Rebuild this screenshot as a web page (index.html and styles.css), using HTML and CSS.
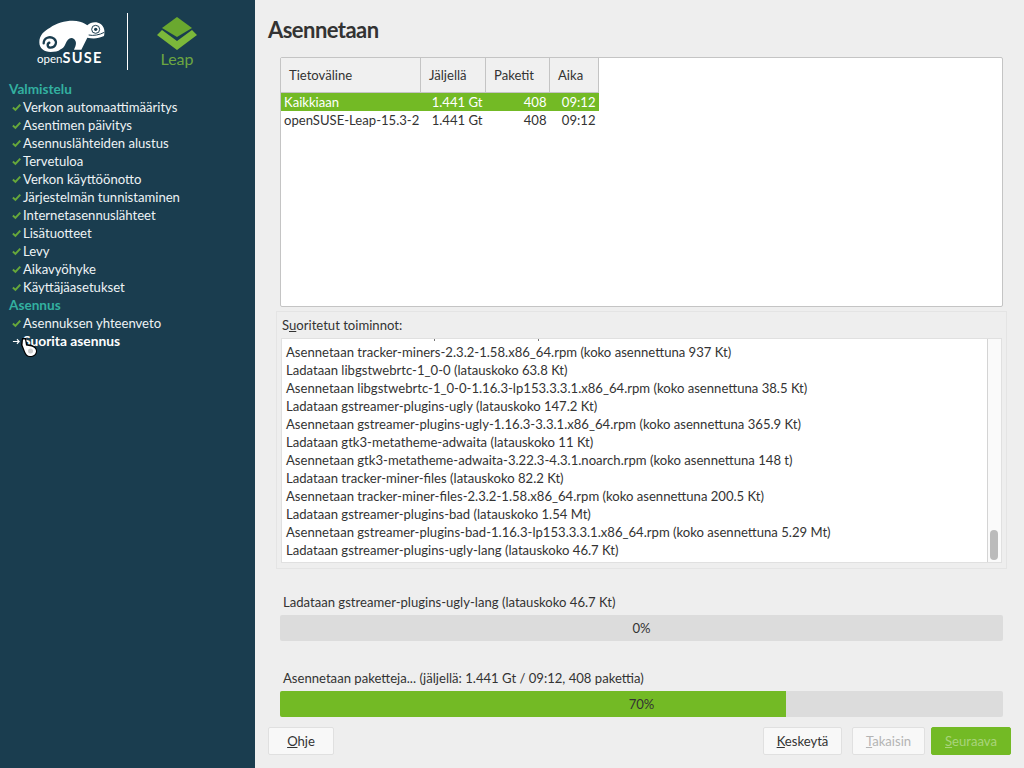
FILE: index.html
```html
<!DOCTYPE html>
<html>
<head>
    <title>Asennetaan</title>
    <link rel="stylesheet" href="styles.css">
</head>
<body>
    <svg class="icon-defs" width="0" height="0">
        <symbol id="check" viewBox="0 0 10 9">
            <path fill="none" stroke="#67a83a" stroke-width="2.200" d="M1 4.500L3.800 7.200L9.200 1.300"/>
        </symbol>
    </svg>
    <div class="sidebar">
        <div class="logo">
            <div class="logo-suse">
                <svg class="chameleon" width="85" height="37" viewBox="0 0 255 111">
                    <path fill="#fff" d="M28 82C28 60 42 48 60 38C85 22 120 13 150 20C160 23 168 27 172 31C182 21 200 19 212 27C222 34 226 48 222 63C205 71 190 72 172 68C166 80 160 92 154 104L132 104C138 92 141 82 133 73C122 64 112 72 106 88C103 96 98 100 92 103C84 110 74 111 62 111C42 111 28 100 28 82Z"/>
                    <path fill="none" stroke="#1a3d4f" stroke-width="7" stroke-linecap="round" d="M41 85C41 68 60 62 72 71C83 81 77 98 62 98C52 98 50 87 58 83"/>
                    <circle cx="197" cy="43" r="12" fill="#fff" stroke="#1a3d4f" stroke-width="3"/>
                    <circle cx="197" cy="43" r="5" fill="#1a3d4f"/>
                    <path fill="none" stroke="#1a3d4f" stroke-width="3" d="M176 60C190 63 208 60 223 52"/>
                </svg>
                <div class="suse-name"><span class="suse-open">open</span><span class="suse-bold">SUSE</span></div>
            </div>
            <div class="logo-line"></div>
            <div class="logo-leap">
                <svg width="40" height="33" viewBox="0 0 40 33">
                    <path fill="#6aa82f" d="M20 0L35 11L20 20L5 11Z"/>
                    <path fill="#7cb83a" d="M5 13L20 24L35 13L40 18L20 33L0 18Z"/>
                </svg>
                <div class="leap-name">Leap</div>
            </div>
        </div>
        <ul class="steps">
            <li class="step-head">Valmistelu</li>
            <li class="step"><svg class="check"><use href="#check"/></svg>Verkon automaattimääritys</li>
            <li class="step"><svg class="check"><use href="#check"/></svg>Asentimen päivitys</li>
            <li class="step"><svg class="check"><use href="#check"/></svg>Asennuslähteiden alustus</li>
            <li class="step"><svg class="check"><use href="#check"/></svg>Tervetuloa</li>
            <li class="step"><svg class="check"><use href="#check"/></svg>Verkon käyttöönotto</li>
            <li class="step"><svg class="check"><use href="#check"/></svg>Järjestelmän tunnistaminen</li>
            <li class="step"><svg class="check"><use href="#check"/></svg>Internetasennuslähteet</li>
            <li class="step"><svg class="check"><use href="#check"/></svg>Lisätuotteet</li>
            <li class="step"><svg class="check"><use href="#check"/></svg>Levy</li>
            <li class="step"><svg class="check"><use href="#check"/></svg>Aikavyöhyke</li>
            <li class="step"><svg class="check"><use href="#check"/></svg>Käyttäjäasetukset</li>
            <li class="step-head">Asennus</li>
            <li class="step"><svg class="check"><use href="#check"/></svg>Asennuksen yhteenveto</li>
            <li class="step step-current">
                <svg class="check" viewBox="0 0 10 9"><path fill="none" stroke="#fff" stroke-width="1.200" d="M1 4.500H8M5.500 2L8 4.500L5.500 7"/></svg>Suorita asennus
                <svg class="cursor" width="16" height="19" viewBox="0 0 16 19">
                    <path fill="#000" d="M1 0H5L6 6L11 7C14 8 16 10 16 13C16 17 13 19 9 19C6 19 4 17 3 14L0 7Z"/>
                    <path fill="#fff" d="M2 1.500H4L5 7.500L10.500 8.500C13 9 15 11 15 13C15 16 12.500 18 9 18C6.500 18 5 16 4 13.500L1.500 7Z"/>
                    <circle cx="9.500" cy="13" r="2.500" fill="#ccc"/>
                </svg>
            </li>
        </ul>
    </div>

    <div class="main">
        <h1>Asennetaan</h1>

        <div class="media-box">
            <table class="media-table">
                <thead>
                    <tr>
                        <th class="col-name">Tietoväline</th>
                        <th class="col-left">Jäljellä</th>
                        <th class="col-pkg">Paketit</th>
                        <th class="col-time">Aika</th>
                    </tr>
                </thead>
                <tbody>
                    <tr class="selected">
                        <td>Kaikkiaan</td>
                        <td class="num">1.441 Gt</td>
                        <td class="num">408</td>
                        <td class="num">09:12</td>
                    </tr>
                    <tr>
                        <td>openSUSE-Leap-15.3-2</td>
                        <td class="num">1.441 Gt</td>
                        <td class="num">408</td>
                        <td class="num">09:12</td>
                    </tr>
                </tbody>
            </table>
        </div>

        <div class="log-frame">
            <div class="log-label">S<u>u</u>oritetut toiminnot:</div>
            <div class="log-box">
                <div class="log-lines">
                    <div class="log-clipped"><span class="tick"></span><span class="tick tick-far"></span></div>
                    <div>Asennetaan tracker-miners-2.3.2-1.58.x86_64.rpm (koko asennettuna 937 Kt)</div>
                    <div>Ladataan libgstwebrtc-1_0-0 (latauskoko 63.8 Kt)</div>
                    <div>Asennetaan libgstwebrtc-1_0-0-1.16.3-lp153.3.3.1.x86_64.rpm (koko asennettuna 38.5 Kt)</div>
                    <div>Ladataan gstreamer-plugins-ugly (latauskoko 147.2 Kt)</div>
                    <div>Asennetaan gstreamer-plugins-ugly-1.16.3-3.3.1.x86_64.rpm (koko asennettuna 365.9 Kt)</div>
                    <div>Ladataan gtk3-metatheme-adwaita (latauskoko 11 Kt)</div>
                    <div>Asennetaan gtk3-metatheme-adwaita-3.22.3-4.3.1.noarch.rpm (koko asennettuna 148 t)</div>
                    <div>Ladataan tracker-miner-files (latauskoko 82.2 Kt)</div>
                    <div>Asennetaan tracker-miner-files-2.3.2-1.58.x86_64.rpm (koko asennettuna 200.5 Kt)</div>
                    <div>Ladataan gstreamer-plugins-bad (latauskoko 1.54 Mt)</div>
                    <div>Asennetaan gstreamer-plugins-bad-1.16.3-lp153.3.3.1.x86_64.rpm (koko asennettuna 5.29 Mt)</div>
                    <div>Ladataan gstreamer-plugins-ugly-lang (latauskoko 46.7 Kt)</div>
                </div>
                <div class="scrollbar"><div class="scroll-thumb"></div></div>
            </div>
        </div>

        <div class="progress-block first">
            <div class="progress-label">Ladataan gstreamer-plugins-ugly-lang (latauskoko 46.7 Kt)</div>
            <div class="progress">
                <div class="progress-text">0%</div>
            </div>
        </div>

        <div class="progress-block second">
            <div class="progress-label">Asennetaan paketteja... (jäljellä: 1.441 Gt / 09:12, 408 pakettia)</div>
            <div class="progress">
                <div class="progress-fill" style="width: 70%"></div>
                <div class="progress-text">70%</div>
            </div>
        </div>

        <div class="buttons">
            <button class="btn btn-help"><u>O</u>hje</button>
            <div class="buttons-right">
                <button class="btn btn-abort"><u>K</u>eskeytä</button>
                <button class="btn btn-back" disabled><u>T</u>akaisin</button>
                <button class="btn btn-next" disabled><u>S</u>euraava</button>
            </div>
        </div>
    </div>
</body>
</html>
```

FILE: styles.css
```css
html, body {
    height: 100%;
}
body {
    display: flex;
    width: 1024px;
    height: 768px;
    margin: 0;
    overflow: hidden;
    font-family: Lato, "Noto Sans", sans-serif;
    font-size: 13.1px;
    color: #333;
    background-color: #eeeeee;
}
.icon-defs {
    position: absolute;
}
.sidebar {
    width: 255px;
    flex-shrink: 0;
    background-color: #1a3d4f;
    color: #eef3f5;
}
.logo {
    display: flex;
    height: 80px;
    padding-top: 13px;
    box-sizing: border-box;
}
.logo-suse {
    width: 85px;
    margin-left: 30px;
    padding-top: 2px;
}
.chameleon {
    display: block;
}
.suse-name {
    display: flex;
    align-items: baseline;
    line-height: 12px;
    margin-left: 7px;
    color: #fff;
}
.suse-open {
    font-size: 11.5px;
}
.suse-bold {
    font-size: 14.5px;
    font-weight: bold;
    letter-spacing: 1.3px;
}
.logo-line {
    width: 1px;
    height: 57px;
    margin-left: 12px;
    background-color: #fff;
}
.logo-leap {
    width: 40px;
    margin-left: 29px;
    padding-top: 4px;
    text-align: center;
}
.logo-leap svg {
    display: block;
}
.leap-name {
    font-size: 16px;
    line-height: 20px;
    color: #6da741;
    margin-top: -1px;
}
.steps {
    list-style: none;
    margin: 0;
    padding: 0;
}
.steps li {
    position: relative;
    height: 18px;
    line-height: 18px;
    white-space: nowrap;
}
.steps .step-head {
    padding-left: 9px;
    font-size: 13.6px;
    font-weight: bold;
    color: #33b0a0;
}
.step {
    display: flex;
    align-items: center;
    padding-left: 12px;
}
.check {
    width: 9px;
    height: 9px;
    margin-right: 2px;
    flex-shrink: 0;
}
.steps .step-current {
    font-size: 13.8px;
    font-weight: bold;
    color: #fff;
}
.cursor {
    position: absolute;
    left: 21px;
    top: 6px;
}
.main {
    flex: 1;
    display: flex;
    flex-direction: column;
    padding: 0 13px 0 13px;
    min-width: 0;
}
h1 {
    margin: 0;
    height: 57px;
    line-height: 59px;
    font-size: 22px;
    font-weight: bold;
    letter-spacing: -0.55px;
    color: #333;
}
.media-box {
    height: 248px;
    margin: 0 8px 0 12px;
    border: 1px solid #c4c4c4;
    border-radius: 2px;
    background-color: #fff;
}
.media-table {
    border-collapse: collapse;
    table-layout: fixed;
    width: 318px;
}
.media-table th {
    height: 34px;
    padding: 0 0 0 8px;
    font-weight: normal;
    text-align: left;
    background-color: #f0f0f0;
    border-right: 1px solid #c4c4c4;
    border-bottom: 1px solid #c4c4c4;
}
.col-name {
    width: 131px;
}
.col-left {
    width: 56px;
}
.col-pkg {
    width: 55px;
}
.col-time {
    width: 40px;
}
.media-table td {
    height: 18px;
    padding: 0 3px;
    white-space: nowrap;
}
.media-table .num {
    text-align: right;
}
.selected td {
    background-color: #73ba25;
    color: #fff;
}
.log-frame {
    height: 258px;
    margin: 4px 4px 0 8px;
    border: 1px solid #e4e4e4;
    box-sizing: border-box;
    padding: 0 4px 5px 4px;
    display: flex;
    flex-direction: column;
}
.log-label {
    height: 26px;
    line-height: 26px;
    margin-left: 1px;
}
.log-box {
    flex: 1;
    display: flex;
    overflow: hidden;
    border: 1px solid #e0e0e0;
    background-color: #fff;
}
.log-lines {
    flex: 1;
    padding-left: 4px;
    line-height: 18px;
    white-space: nowrap;
}
.log-clipped {
    display: flex;
    height: 4px;
    padding-left: 148px;
}
.tick {
    width: 1px;
    height: 2px;
    background-color: #777;
}
.tick-far {
    margin-left: 103px;
}
.scrollbar {
    position: relative;
    width: 13px;
    flex-shrink: 0;
    border-left: 1px solid #d4d4d4;
    background-color: #fafafa;
}
.scroll-thumb {
    position: absolute;
    left: 2px;
    bottom: 2px;
    width: 8px;
    height: 30px;
    border-radius: 4px;
    background-color: #bbbbbb;
}
.progress-block {
    margin: 0 8px 0 12px;
}
.progress-block.first {
    margin-top: 24px;
}
.progress-block.second {
    margin-top: 28px;
}
.progress-label {
    height: 22px;
    line-height: 18px;
    padding-left: 3px;
}
.progress {
    position: relative;
    height: 26px;
    border-radius: 2px;
    background-color: #dcdcdc;
    overflow: hidden;
}
.progress-fill {
    height: 100%;
    background-color: #73ba25;
}
.progress-text {
    position: absolute;
    left: 0;
    right: 0;
    top: 0;
    line-height: 26px;
    text-align: center;
}
.buttons {
    display: flex;
    justify-content: space-between;
    margin-top: 10px;
}
.buttons-right {
    display: flex;
}
.btn {
    height: 28px;
    padding: 0;
    font-family: inherit;
    font-size: 13.1px;
    color: #333;
    background-color: #f8f8f8;
    border: 1px solid #e0e0e0;
    border-radius: 2px;
}
.btn-help {
    width: 66px;
}
.btn-abort {
    width: 79px;
}
.btn-back {
    width: 73px;
    margin-left: 10px;
    color: #b4b4b4;
}
.btn-next {
    width: 80px;
    margin-left: 6px;
    color: #a9d47c;
    background-color: #73ba25;
    border-color: #73ba25;
}
```
